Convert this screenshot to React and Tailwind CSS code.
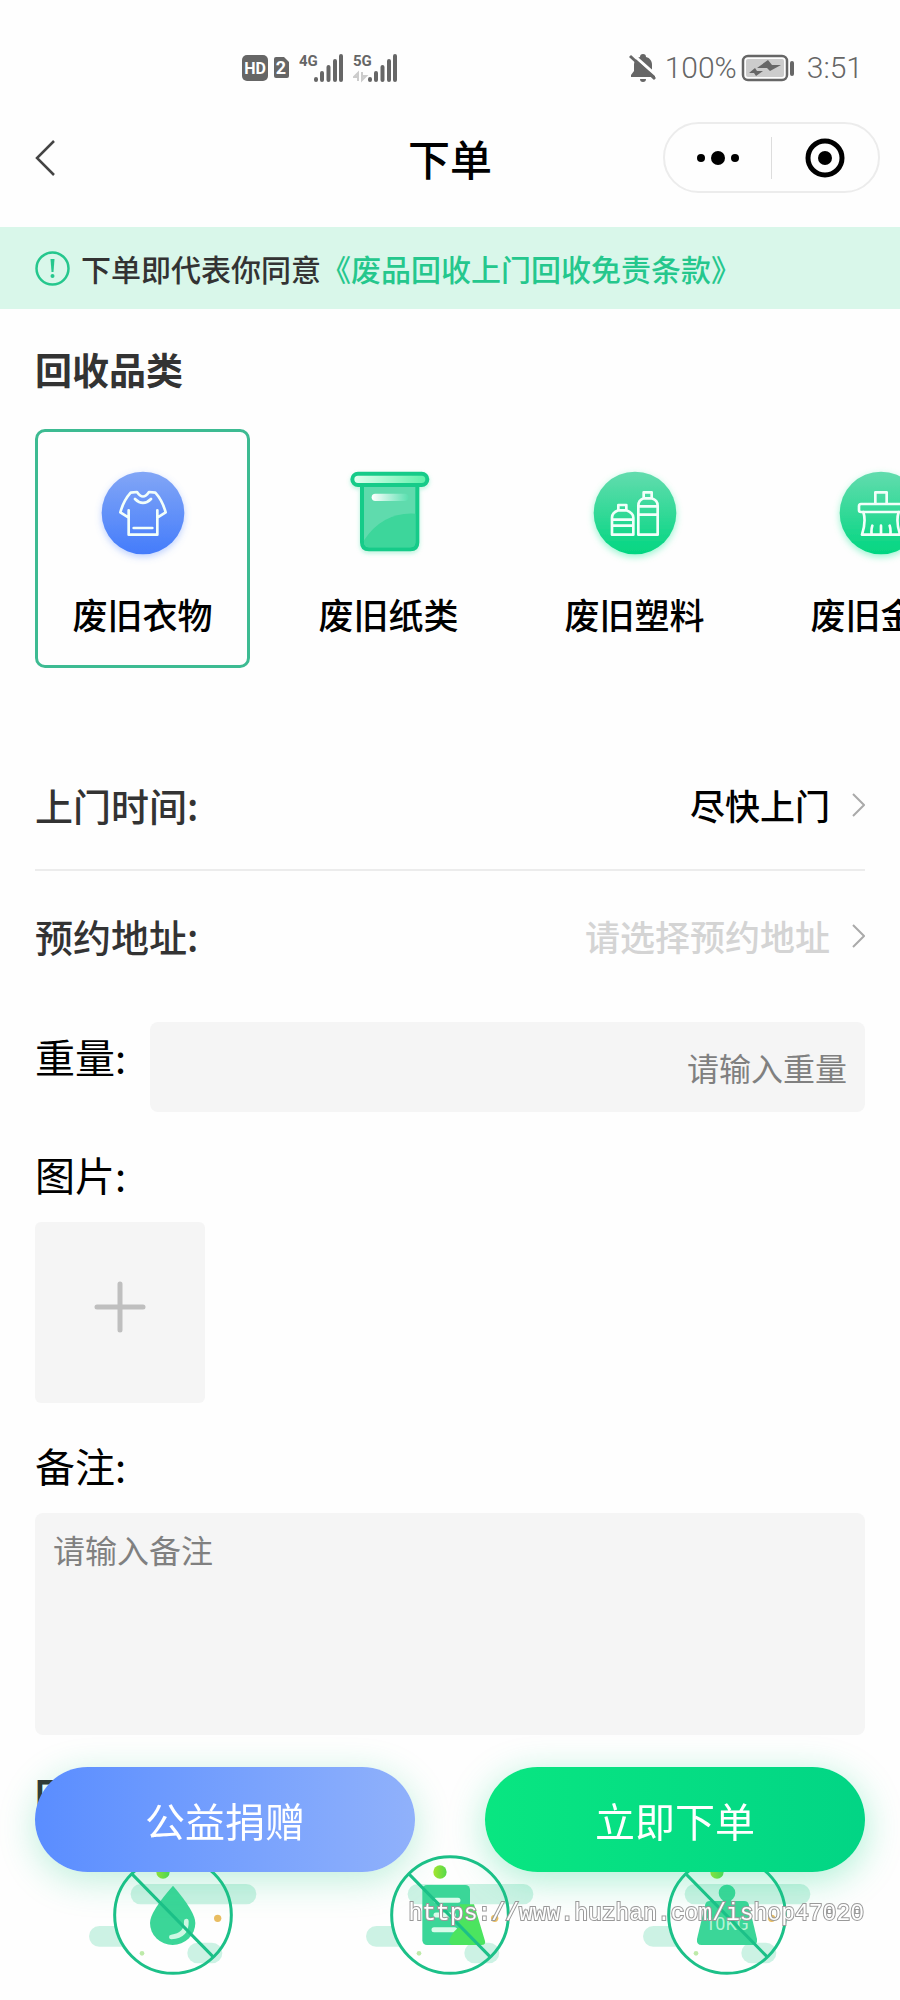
import { useState } from 'react';

const CATEGORIES = [
  { id: 'clothes', label: '废旧衣物', Icon: ClothesIcon },
  { id: 'paper', label: '废旧纸类', Icon: PaperIcon },
  { id: 'plastic', label: '废旧塑料', Icon: PlasticIcon },
  { id: 'metal', label: '废旧金属', Icon: MetalIcon },
];

function Signal({ label, data }) {
  return (
    <svg className="h-[30px] w-[46px]" viewBox="0 0 46 30" aria-hidden="true">
      <text x="0" y="13" fontSize="15" fontWeight="700" fill="#666" fontFamily="Roboto, sans-serif">
        {label}
      </text>
      {data && <path d="M5 28V20L1 24h3M9 19v8l4-4h-3" stroke="#ccc" strokeWidth="2" fill="none" />}
      <path
        d="M17 26v1M23 20v7M29.500 14v13M36 8v19M42 3v24"
        stroke="#666"
        strokeWidth="4"
        strokeLinecap="round"
      />
    </svg>
  );
}

function StatusBar() {
  return (
    <div className="flex h-[88px] items-center justify-between pt-12 pr-[37px] pl-[241px] font-[Roboto,sans-serif] text-[#666]">
      <div className="flex items-center">
        <svg className="h-[28px] w-[50px]" viewBox="0 0 50 28" aria-hidden="true">
          <rect x="1" y="1" width="26" height="26" rx="5" fill="#666" />
          <text x="14" y="20" textAnchor="middle" fontSize="16" fontWeight="700" fill="#fff" fontFamily="Roboto, sans-serif">
            HD
          </text>
          <path d="M35 3h8l5 5v14a2 2 0 0 1-2 2H35a2 2 0 0 1-2-2V5a2 2 0 0 1 2-2z" fill="#666" />
          <text x="40" y="20" textAnchor="middle" fontSize="18" fontWeight="700" fill="#fff" fontFamily="Roboto, sans-serif">
            2
          </text>
        </svg>
        <div className="ml-2 flex gap-2">
          <Signal label="4G" />
          <Signal label="5G" data />
        </div>
      </div>
      <div className="flex items-center">
        <svg className="h-[30px] w-[28px]" viewBox="0 0 28 30" aria-hidden="true">
          <path
            d="M2 24v-2l3-4v-6c0-4 2-7 6-8a3 3 0 0 1 6 0c4 1 6 4 6 8v6l3 4v2zM11 26h6a3 3 0 0 1-6 0z"
            fill="#666"
          />
          <path d="M2 0l26 23" stroke="#fefefe" strokeWidth="3" />
          <path d="M1 3l25 23" stroke="#666" strokeWidth="3" />
        </svg>
        <span className="ml-2 text-[30px] leading-10 font-light">100%</span>
        <svg className="ml-1 h-[28px] w-[54px]" viewBox="0 0 54 28" aria-hidden="true">
          <rect x="2" y="2" width="44" height="24" rx="5" fill="none" stroke="#666" strokeWidth="2.500" />
          <rect x="5" y="5" width="38" height="18" rx="2" fill="#ccc" />
          <path d="M51 9v11" stroke="#666" strokeWidth="4" strokeLinecap="round" />
          <path d="M27 6l4 5h9l-11 6-3-3H16zM14 14l2 3h6l-7 5-2-3H8z" fill="#666" />
        </svg>
        <span className="ml-3 text-[30px] leading-10 font-light">3:51</span>
      </div>
    </div>
  );
}

function TitleBar() {
  return (
    <header className="grid h-[139px] grid-cols-[1fr_auto_1fr] items-center px-5">
      <button type="button" aria-label="返回" className="justify-self-start pl-[15px]">
        <svg className="h-9 w-5" viewBox="0 0 20 36" fill="none" stroke="#444" strokeWidth="2.500">
          <path d="M19 1L2 18l17 17" />
        </svg>
      </button>
      <h1 className="text-[42px] leading-[56px] font-medium text-black">下单</h1>
      <div className="flex h-[71px] w-[217px] items-center justify-self-end rounded-full border-2 border-[#ececec]">
        <button type="button" aria-label="更多" className="flex flex-1 justify-center">
          <svg className="h-[14px] w-[42px]" viewBox="0 0 42 14">
            <circle cx="4" cy="7" r="4" />
            <circle cx="21" cy="7" r="7" />
            <circle cx="38" cy="7" r="4" />
          </svg>
        </button>
        <span className="h-[42px] w-px bg-[#ddd]" />
        <button type="button" aria-label="关闭" className="flex flex-1 justify-center">
          <svg className="h-10 w-10" viewBox="0 0 40 40">
            <circle cx="20" cy="20" r="17" fill="none" stroke="#000" strokeWidth="5" />
            <circle cx="20" cy="20" r="7" />
          </svg>
        </button>
      </div>
    </header>
  );
}

function Disc({ from, to, glow, id, children }) {
  return (
    <svg className="h-[110px] w-[110px]" viewBox="-165 -165 330 330" aria-hidden="true">
      <defs>
        <linearGradient id={id} x1="0" y1="0" x2="0" y2="1">
          <stop offset="0" stopColor={from} />
          <stop offset="1" stopColor={to} />
        </linearGradient>
        <filter id={`${id}-glow`} x="-30%" y="-30%" width="160%" height="160%">
          <feDropShadow dx="0" dy="8" stdDeviation="11" floodColor={glow} floodOpacity="0.4" />
        </filter>
      </defs>
      <circle r="124" fill={`url(#${id})`} filter={`url(#${id}-glow)`} />
      <g fill="none" stroke="#f2fffa" strokeWidth="8" strokeLinejoin="round" strokeLinecap="round">
        {children}
      </g>
    </svg>
  );
}

function ClothesIcon() {
  return (
    <Disc id="clothes" from="#82a6f6" to="#447cfb" glow="#5c8dff">
      <path d="M-43-8V65H43V-8M-43 14L-68-2Q-58-38-37-61L-18-63Q0-36 18-63L37-61Q58-38 68-2L43 14" />
      <path d="M-24-42Q0-18 24-42M-28 45H28" />
    </Disc>
  );
}

function PlasticIcon() {
  return (
    <Disc id="plastic" from="#63dcae" to="#02d681" glow="#08e58a">
      <path d="M-69 65V14Q-69-1-50-8V-24H-26V-8Q-5 0-5 14V65zM-69 20H-5M-69 38H-5M-50-8H-26" />
      <path d="M10 65V-22Q10-38 26-44V-62H50V-44Q68-38 68-22V65zM10-20H68M10 5H68M26-44H50" />
    </Disc>
  );
}

function MetalIcon() {
  return (
    <Disc id="metal" from="#63dcae" to="#02d681" glow="#08e58a">
      <path d="M-17-27V-62H17V-27M-60-27H60Q66-27 66-20V-8Q66-3 60-3H-60Q-66-3-66-8V-20Q-66-27-60-27z" />
      <path d="M-53-3Q-44 25-57 65H57Q44 25 53-3M-28 65Q-30 50-26 38M0 65V38M28 65Q30 50 26 38" />
    </Disc>
  );
}

function PaperIcon() {
  return (
    <svg className="h-[110px] w-[110px]" viewBox="-167 -169 330 330" aria-hidden="true">
      <defs>
        <linearGradient id="paper-roll">
          <stop offset="0" stopColor="#e4fff1" />
          <stop offset="1" stopColor="#5bf0a8" />
        </linearGradient>
        <linearGradient id="paper-bar">
          <stop offset="0" stopColor="#fff" />
          <stop offset="1" stopColor="#5be0b0" />
        </linearGradient>
        <filter id="paper-glow" x="-30%" y="-30%" width="160%" height="160%">
          <feDropShadow dx="0" dy="6" stdDeviation="7" floodColor="#14d98b" floodOpacity="0.3" />
        </filter>
      </defs>
      <g filter="url(#paper-glow)">
        <path d="M-83-100H83V84Q83 105 62 105H-62Q-83 105-83 84z" fill="#5fdbad" stroke="#18cb89" strokeWidth="12" />
        <path d="M-77 78Q-20-8 77-2V84Q77 99 62 99H-62Q-77 99-77 84z" fill="#3cd69b" />
        <rect x="-112" y="-122" width="225" height="34" rx="17" fill="url(#paper-roll)" stroke="#18cb89" strokeWidth="12" />
        <rect x="-54" y="-62" width="110" height="22" rx="11" fill="url(#paper-bar)" />
      </g>
    </svg>
  );
}

function Forbidden({ id, children }) {
  return (
    <svg className="h-[120px] w-[170px]" viewBox="-255 -180 510 360" aria-hidden="true">
      <defs>
        <linearGradient id={id}>
          <stop offset="0" stopColor="#a6e52e" />
          <stop offset="1" stopColor="#55da4c" />
        </linearGradient>
      </defs>
      <g fill="#20c98b" opacity="0.22">
        <rect x="-127" y="-93" width="377" height="61" rx="30" />
        <path d="M-172 33H-221a31 31 0 0 0 0 62H-152Q-168 66-172 33z" />
        <rect x="43" y="83" width="105" height="62" rx="31" />
      </g>
      <circle cx="-30" cy="-129" r="20" fill={`url(#${id})`} />
      <circle cx="134" cy="10" r="11" fill="#e9bd62" />
      <circle cx="-93" cy="115" r="7" fill="#bdeaa9" />
      {children}
      <g fill="none" stroke="#1cc088" strokeWidth="9">
        <circle r="175" />
        <path d="M-122-122L120 125" />
      </g>
    </svg>
  );
}

function WaterBan() {
  return (
    <Forbidden id="ban-water">
      <path d="M0-88Q67-10 67 24A68 66 0 0 1-69 24Q-69-10 0-88z" fill="#3bd698" />
      <path d="M40 18Q42 62-5 66" fill="none" stroke="#cdf8e3" strokeWidth="14" strokeLinecap="round" />
    </Forbidden>
  );
}

function PaperBan() {
  return (
    <Forbidden id="ban-paper">
      <rect x="-83" y="-90" width="143" height="180" rx="14" fill="#3bd698" />
      <path d="M-42-44H24M-42 0H10M-48 44H14" stroke="#d9fbea" strokeWidth="15" strokeLinecap="round" />
      <path d="M30-32H72L105 78Q108 90 94 90H12Q-6 90-1 72Q12 45 28 36z" fill="#4be45f" />
    </Forbidden>
  );
}

function WeightBan() {
  return (
    <Forbidden id="ban-weight">
      <circle cy="-66" r="25" fill="#3bd698" />
      <path
        d="M-52-42H52Q62-42 65-32L90 72Q92 90 76 90H-76Q-92 90-90 72L-65-32Q-62-42-52-42z"
        fill="#3bd698"
      />
      <path d="M0-56V-38" stroke="#3bd698" strokeWidth="26" />
      <text y="46" textAnchor="middle" fontSize="54" fill="#b5f3d6" fontFamily="Roboto, sans-serif">
        10KG
      </text>
    </Forbidden>
  );
}

function PickerRow({ label, value, placeholder }) {
  return (
    <button type="button" className="flex h-[130px] w-full items-center text-left font-medium">
      <span className="flex-1 text-[38px] leading-10 text-[#333]">{label}</span>
      <span className={`text-[35px] leading-10 ${value ? 'text-black' : 'text-[#d4d4d4]'}`}>
        {value || placeholder}
      </span>
      <svg className="ml-[22px] h-6 w-[13px]" viewBox="0 0 13 24" fill="none" stroke="#aaa" strokeWidth="2">
        <path d="M1 1l11 11L1 23" />
      </svg>
    </button>
  );
}

export default function App() {
  const [category, setCategory] = useState('clothes');

  return (
    <div className="relative overflow-hidden bg-[#fefefe] font-['Noto_Sans_CJK_SC',sans-serif] text-black">
      <StatusBar />
      <TitleBar />

      <div className="flex h-[82px] items-center bg-[#d9f7ea] px-[35px] text-[30px] leading-10 font-medium whitespace-nowrap text-[#333]">
        <svg className="mr-[11px] h-[35px] w-[35px] shrink-0" viewBox="0 0 35 35" aria-hidden="true">
          <circle cx="17.500" cy="17.500" r="16" fill="none" stroke="#25c78d" strokeWidth="2.500" />
          <path d="M15.500 8h4l-1 13h-2z" fill="#25c78d" />
          <circle cx="17.500" cy="25" r="2" fill="#25c78d" />
        </svg>
        <p>
          下单即代表你同意
          <a href="#terms" className="text-[#25c78d]">
            《废品回收上门回收免责条款》
          </a>
        </p>
      </div>

      <main className="px-[35px] pb-[25px]">
        <h2 className="mt-10 text-[37px] leading-10 font-bold text-[#333]">回收品类</h2>

        <div className="mt-10 -mr-[35px] flex gap-[31px] overflow-x-auto [scrollbar-width:none]">
          {CATEGORIES.map(({ id, label, Icon }) => (
            <button
              key={id}
              type="button"
              aria-pressed={category === id}
              onClick={() => setCategory(id)}
              className={`flex h-[239px] w-[215px] shrink-0 flex-col items-center rounded-[10px] border-3 pt-[26px] ${
                category === id ? 'border-[#3dbb92]' : 'border-transparent'
              }`}
            >
              <Icon />
              <span className="mt-[26px] text-[35px] leading-10 font-medium">{label}</span>
            </button>
          ))}
        </div>

        <div className="mt-[73px] border-b-2 border-[#ececec] [&>button]:h-[128px]">
          <PickerRow label="上门时间:" value="尽快上门" />
        </div>
        <PickerRow label="预约地址:" placeholder="请选择预约地址" />

        <div className="mt-[21px] flex items-start gap-6">
          <label htmlFor="weight" className="text-[40px] leading-[68px]">
            重量:
          </label>
          <input
            id="weight"
            type="text"
            placeholder="请输入重量"
            className="h-[90px] min-w-0 flex-1 rounded-lg bg-[#f5f5f5] px-[18px] text-right text-[32px] outline-none placeholder:text-[#808080]"
          />
        </div>

        <h3 className="mt-[42px] text-[40px] leading-10">图片:</h3>
        <button
          type="button"
          aria-label="添加图片"
          className="mt-7 flex h-[181px] w-[170px] justify-center rounded-md bg-[#f5f5f5] pt-[59px]"
        >
          <svg className="h-[52px] w-[52px]" viewBox="0 0 52 52" stroke="#bfbfbf" strokeWidth="5" strokeLinecap="round">
            <path d="M26 3v46M3 26h46" />
          </svg>
        </button>

        <label htmlFor="remark" className="mt-[42px] block text-[40px] leading-10">
          备注:
        </label>
        <textarea
          id="remark"
          placeholder="请输入备注"
          className="mt-7 block h-[222px] w-full resize-none rounded-lg bg-[#f5f5f5] px-[18px] py-4 text-[32px] leading-10 outline-none placeholder:text-[#808080]"
        />

        <h2 className="mt-10 text-[37px] leading-10 font-bold text-[#333]">回收须知</h2>
        <div className="mt-10 grid grid-cols-3 justify-items-center">
          <WaterBan />
          <PaperBan />
          <WeightBan />
        </div>
      </main>

      <div className="fixed inset-x-0 bottom-[128px] flex gap-[70px] px-[35px] text-[40px] text-white">
        <button
          type="button"
          className="h-[105px] flex-1 rounded-full bg-linear-to-r from-[#5a8dff] to-[#90b1fb] shadow-[0_8px_36px_rgba(20,200,130,0.28)]"
        >
          公益捐赠
        </button>
        <button
          type="button"
          className="h-[105px] flex-1 rounded-full bg-linear-to-r from-[#09e681] to-[#02d585] shadow-[0_8px_36px_rgba(20,215,135,0.35)]"
        >
          立即下单
        </button>
      </div>

      <p className="pointer-events-none absolute right-9 bottom-[66px] font-['Liberation_Mono',monospace] text-[23px] leading-10 text-white [-webkit-text-stroke:2px_#999] [paint-order:stroke]">
        https://www.huzhan.com/ishop47020
      </p>
    </div>
  );
}
